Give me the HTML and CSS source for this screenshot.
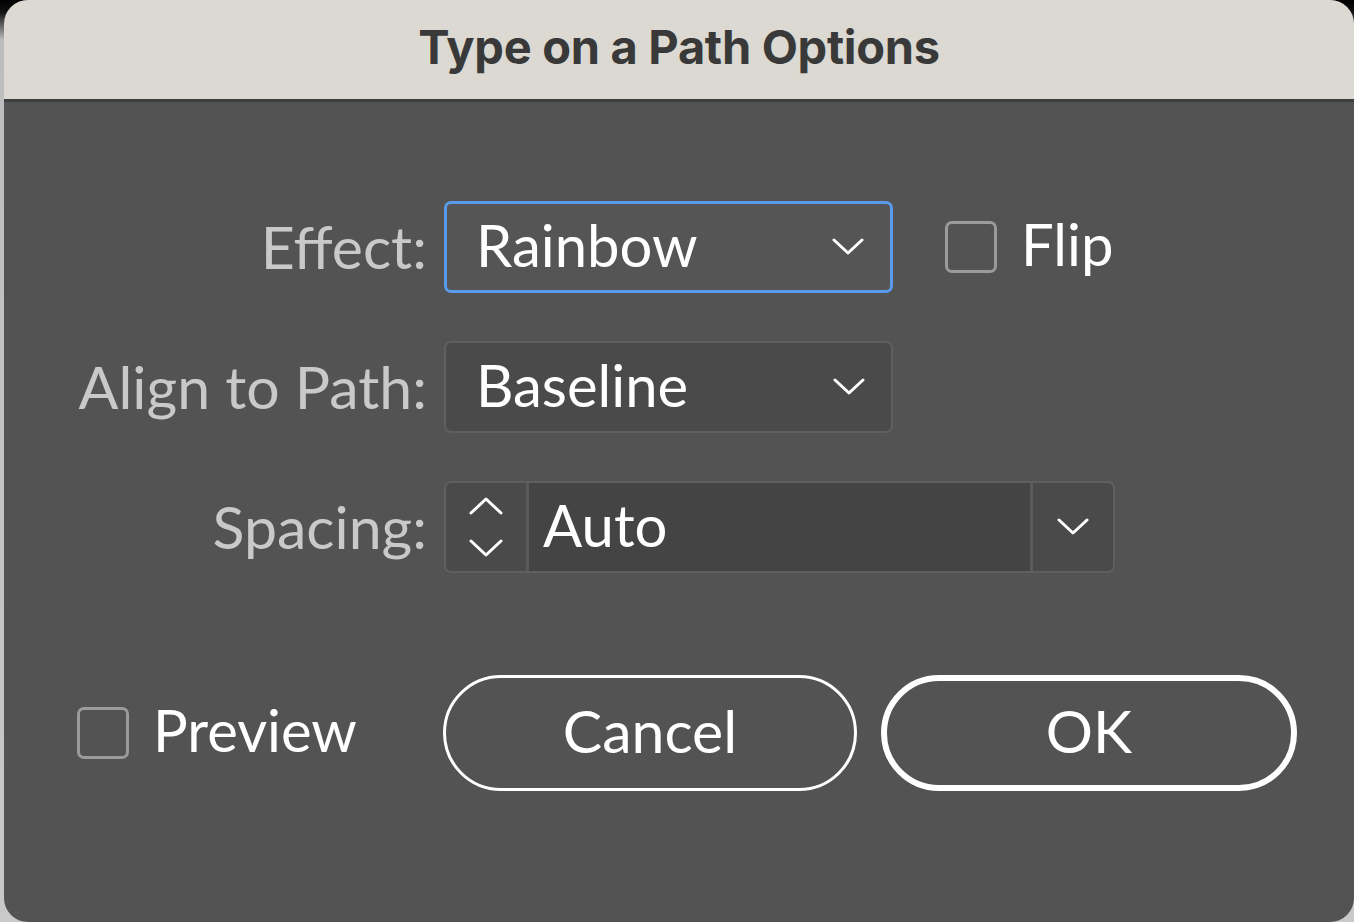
FILE: index.html
```html
<!DOCTYPE html>
<html>
<head>
<meta charset="utf-8">
<link rel="stylesheet" href="styles.css">
</head>
<body>
<div class="dialog">
  <div class="titlebar">Type on a Path Options</div>
  <div class="content">
    <div class="form">
      <div class="label">Effect:</div>
      <div class="row-controls">
        <div class="select focused">
          <span class="value">Rainbow</span>
          <svg class="chev" viewBox="0 0 32 18"><polyline points="2,2 16,15 30,2"/></svg>
        </div>
        <label class="check">
          <span class="box"></span>
          <span class="check-text">Flip</span>
        </label>
      </div>

      <div class="label">Align to Path:</div>
      <div class="row-controls">
        <div class="select">
          <span class="value">Baseline</span>
          <svg class="chev" viewBox="0 0 32 18"><polyline points="2,2 16,15 30,2"/></svg>
        </div>
      </div>

      <div class="label">Spacing:</div>
      <div class="row-controls">
        <div class="combo">
          <div class="stepper">
            <svg class="step" viewBox="0 0 34 18"><polyline points="2,16 17,2 32,16"/></svg>
            <svg class="step" viewBox="0 0 34 18"><polyline points="2,2 17,16 32,2"/></svg>
          </div>
          <div class="field"><span class="value">Auto</span></div>
          <div class="drop">
            <svg class="chev" viewBox="0 0 32 18"><polyline points="2,2 16,15 30,2"/></svg>
          </div>
        </div>
      </div>
    </div>

    <div class="footer">
      <label class="check preview">
        <span class="box"></span>
        <span class="check-text">Preview</span>
      </label>
      <div class="buttons">
        <div class="btn">Cancel</div>
        <div class="btn default">OK</div>
      </div>
    </div>
  </div>
</div>
</body>
</html>
```

FILE: styles.css
```css
html, body {
  margin: 0;
  padding: 0;
}
body {
  width: 1354px;
  height: 922px;
  overflow: hidden;
  background: linear-gradient(to bottom, #000 0px, #111 12px, #bdbdbd 40px, #c9c9c9 100%);
  font-family: "Lato", "Open Sans", sans-serif;
}
.dialog {
  margin-left: 4px;
  width: 1350px;
  height: 922px;
  border-radius: 24px;
  overflow: hidden;
  background: #535353;
  display: flex;
  flex-direction: column;
}
.titlebar {
  flex: none;
  height: 102px;
  box-sizing: border-box;
  background: #dcd9d2;
  border-bottom: 3px solid #3f3f3f;
  display: flex;
  align-items: center;
  justify-content: center;
  font-family: "Inter", "Roboto", sans-serif;
  font-weight: 700;
  font-size: 47px;
  letter-spacing: -0.3px;
  color: #393939;
  padding-bottom: 6px;
}
.content {
  flex: 1;
  display: flex;
  flex-direction: column;
  padding-top: 99px;
}
.form {
  display: grid;
  grid-template-columns: 423px auto;
  column-gap: 17px;
  row-gap: 48px;
  align-items: center;
}
.label {
  text-align: right;
  color: #c9c9c9;
  font-size: 59px;
  line-height: 92px;
}
.row-controls {
  display: flex;
  align-items: center;
  gap: 52px;
}
.select {
  width: 449px;
  height: 92px;
  box-sizing: border-box;
  border: 2px solid #5f5f5f;
  border-radius: 7px;
  background: #4a4a4a;
  display: flex;
  align-items: center;
  justify-content: space-between;
  padding: 0 26px 0 30px;
}
.select.focused {
  border: 3px solid #5a9ae8;
  background: #555555;
  padding-left: 29px;
}
.value {
  color: #ffffff;
  font-size: 58px;
  line-height: 1;
  padding-bottom: 4px;
}
.chev {
  width: 32px;
  height: 18px;
  fill: none;
  stroke: #ffffff;
  stroke-width: 3;
  stroke-linecap: round;
  stroke-linejoin: round;
}
.check {
  display: flex;
  align-items: center;
  gap: 24px;
}
.box {
  width: 52px;
  height: 52px;
  box-sizing: border-box;
  border: 3px solid #9b9b9b;
  border-radius: 7px;
  background: #535353;
}
.check-text {
  color: #ffffff;
  font-size: 58px;
  line-height: 1;
  padding-bottom: 6px;
}
.combo {
  width: 671px;
  height: 92px;
  box-sizing: border-box;
  border: 2px solid #5f5f5f;
  border-radius: 7px;
  background: #4a4a4a;
  display: flex;
  overflow: hidden;
}
.stepper {
  width: 80px;
  flex: none;
  display: flex;
  flex-direction: column;
  align-items: center;
  justify-content: center;
  gap: 24px;
  border-right: 3px solid #5a5a5a;
}
.step {
  width: 34px;
  height: 18px;
  fill: none;
  stroke: #ffffff;
  stroke-width: 3;
  stroke-linecap: round;
  stroke-linejoin: round;
}
.field {
  flex: 1;
  background: #444444;
  display: flex;
  align-items: center;
  padding-left: 14px;
}
.drop {
  width: 80px;
  flex: none;
  border-left: 3px solid #5a5a5a;
  display: flex;
  align-items: center;
  justify-content: center;
}
.footer {
  display: flex;
  align-items: center;
  margin-top: 102px;
  padding-left: 73px;
}
.preview {
  width: 366px;
  flex: none;
}
.buttons {
  display: flex;
  gap: 24px;
}
.btn {
  width: 414px;
  height: 116px;
  box-sizing: border-box;
  border: 3px solid #ffffff;
  border-radius: 58px;
  display: flex;
  align-items: center;
  justify-content: center;
  color: #ffffff;
  font-size: 59px;
  padding-bottom: 6px;
}
.btn.default {
  width: 416px;
  border-width: 6px;
}
```
